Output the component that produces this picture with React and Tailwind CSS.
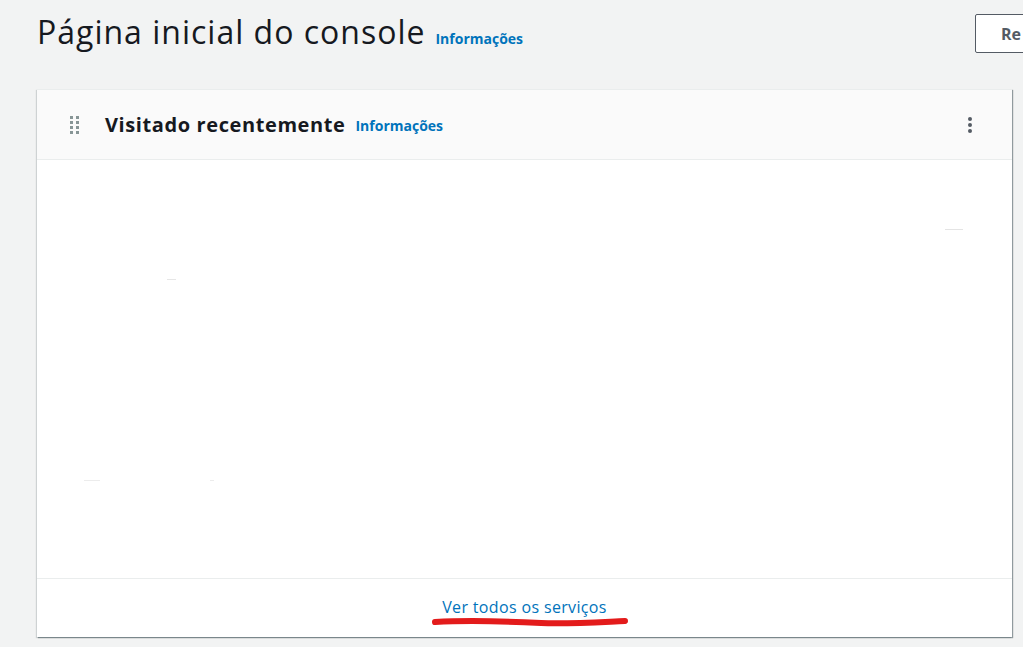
export default function App() {
  return (
    <div className="w-[1023px] h-[647px] overflow-hidden bg-[#f2f3f3] relative" style={{ fontFamily: '"Open Sans", "Noto Sans", Arial, sans-serif' }}>
      <div className="flex items-start pl-[37px] pt-[10px] h-[89px]">
        <div className="flex items-baseline gap-[10px] w-[938px] shrink-0">
          <h1 className="text-[32px] leading-[44px] font-normal text-[#16191f] tracking-[1px]">Página inicial do console</h1>
          <a className="text-[14px] font-bold text-[#0073bb]">Informações</a>
        </div>
        <div className="pt-[4px] shrink-0">
          <button className="h-[39px] w-[80px] border border-[#545b64] rounded-[2px] bg-white text-left pl-[25px] text-[16px] font-bold text-[#545b64]">Re</button>
        </div>
      </div>
      <div className="ml-[37px] w-[975px] bg-white border-t border-[#eaeded] shadow-[1px_1px_1px_0_rgba(0,28,36,0.3),1px_1px_1px_0_rgba(0,28,36,0.15),-1px_1px_1px_0_rgba(0,28,36,0.15)]">
        <div className="h-[70px] bg-[#fafafa] border-b border-[#eaeded] flex items-center pl-[33px] pr-[40px]">
          <svg width="10" height="18" viewBox="0 0 10 18" className="mr-[25px]">
            {[0, 5, 10, 15].map((y) => (
              <g key={y} fill="#879596">
                <rect x="0" y={y} width="3" height="3" />
                <rect x="6" y={y} width="3" height="3" />
              </g>
            ))}
          </svg>
          <h2 className="text-[20px] font-bold text-[#16191f] tracking-[0.6px]">Visitado recentemente</h2>
          <a className="ml-[10px] mt-[2px] text-[14px] font-bold text-[#0073bb]">Informações</a>
          <div className="flex-1" />
          <svg width="4" height="16" viewBox="0 0 4 16">
            <circle cx="2" cy="2" r="2" fill="#545b64" />
            <circle cx="2" cy="8" r="2" fill="#545b64" />
            <circle cx="2" cy="14" r="2" fill="#545b64" />
          </svg>
        </div>
        <div className="h-[418px] relative">
          <div className="absolute left-[908px] top-[69px] w-[18px] h-px bg-[#e4e4e4]" />
          <div className="absolute left-[130px] top-[119px] w-[9px] h-px bg-[#e6e6e6]" />
          <div className="absolute left-[47px] top-[320px] w-[16px] h-px bg-[#ececec]" />
          <div className="absolute left-[173px] top-[320px] w-[4px] h-px bg-[#ececec]" />
        </div>
        <div className="h-[59px] border-t border-[#eaeded] flex items-start justify-center pt-[16px] relative">
          <a className="text-[16px] text-[#0073bb] tracking-[0.35px]">Ver todos os serviços</a>
          <svg className="absolute left-[394px] top-[37px]" width="200" height="12" viewBox="0 0 200 12">
            <path d="M4 6 C 40 4, 70 5, 110 7 C 140 8, 170 6, 194 5" stroke="#e31b1b" strokeWidth="6" strokeLinecap="round" fill="none" />
          </svg>
        </div>
      </div>
    </div>
  );
}
